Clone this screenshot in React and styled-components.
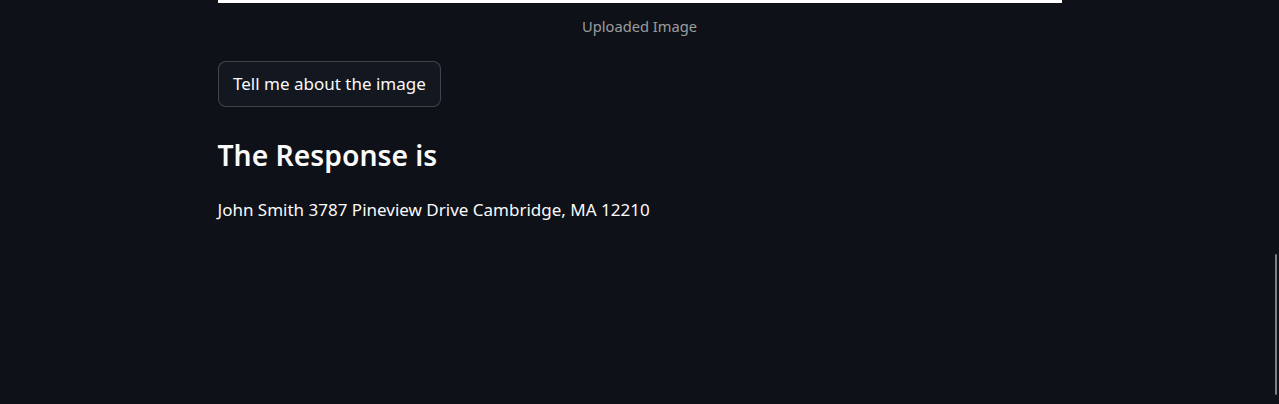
import React from "react";
import styled, { createGlobalStyle } from "styled-components";

const GlobalStyle = createGlobalStyle`
  html, body {
    margin: 0;
    padding: 0;
    background: #0e1117;
    overflow: hidden;
  }
  body {
    color: #fafafa;
    font-family: "Noto Sans", "Open Sans", sans-serif;
    -webkit-font-smoothing: antialiased;
  }
  * { box-sizing: border-box; }
`;

const Page = styled.div`
  width: 1279px;
  height: 404px;
  display: flex;
  justify-content: center;
  background: #0e1117;
`;

const Main = styled.main`
  width: 844px;
  display: flex;
  flex-direction: column;
  align-items: flex-start;
`;

const Figure = styled.figure`
  margin: 0;
  width: 100%;
  display: flex;
  flex-direction: column;
  align-items: center;
`;

const ImageEdge = styled.div`
  width: 100%;
  height: 3px;
  background: #ffffff;
`;

const Caption = styled.figcaption`
  margin-top: 13px;
  font-size: 14.67px;
  line-height: 21px;
  color: rgba(250, 250, 250, 0.6);
`;

const Button = styled.button`
  margin-top: 24px;
  height: 46px;
  padding: 0 14.5px;
  display: inline-flex;
  align-items: center;
  justify-content: center;
  background: rgb(19, 23, 32);
  border: 1px solid rgba(250, 250, 250, 0.2);
  border-radius: 8px;
  color: #fafafa;
  font-family: inherit;
  font-size: 17px;
  line-height: 27.2px;
  cursor: pointer;
`;

const Heading = styled.h3`
  margin: 31px 0 0;
  font-size: 28.3px;
  font-weight: 600;
  line-height: 34px;
  color: #fafafa;
`;

const Paragraph = styled.p`
  margin: 25px 0 0;
  font-size: 17px;
  line-height: 25.5px;
  color: #fafafa;
`;

const ScrollThumb = styled.div`
  position: fixed;
  top: 254px;
  right: 2px;
  width: 2px;
  height: 141px;
  border-radius: 1px;
  background: #7d7f83;
`;

export default function App() {
  return (
    <>
      <GlobalStyle />
      <Page>
        <Main>
          <Figure>
            <ImageEdge />
            <Caption>Uploaded Image</Caption>
          </Figure>
          <Button type="button">Tell me about the image</Button>
          <Heading>The Response is</Heading>
          <Paragraph>John Smith 3787 Pineview Drive Cambridge, MA 12210</Paragraph>
        </Main>
      </Page>
      <ScrollThumb />
    </>
  );
}
